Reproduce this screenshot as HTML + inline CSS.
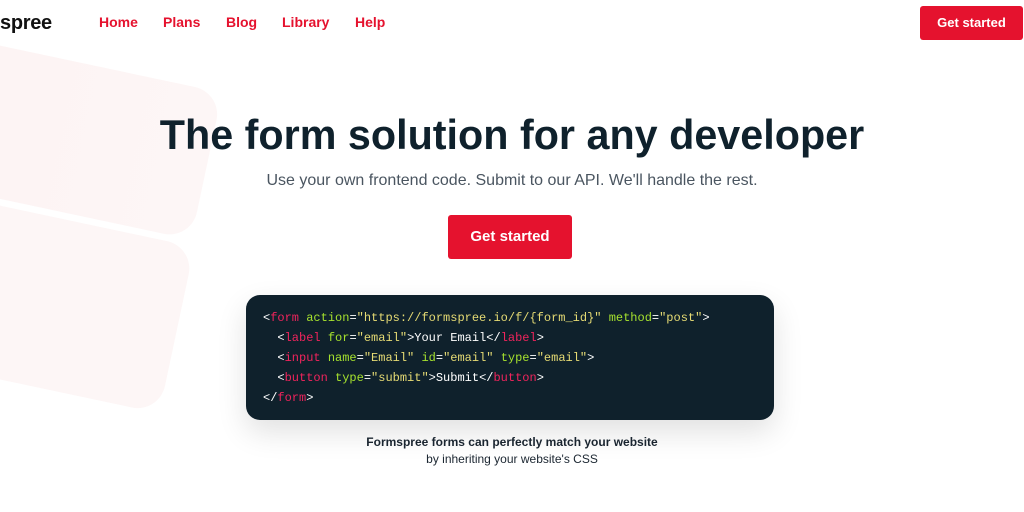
<!DOCTYPE html>
<html><head><meta charset="utf-8"><style>
body{margin:0;width:1024px;height:512px;overflow:hidden;background:#fff;font-family:"Liberation Sans",sans-serif;position:relative}
.shape{position:absolute;border-radius:28px}
.nav a{position:absolute;top:14px;color:#e5122e;font-weight:bold;font-size:14px;text-decoration:none}
.logo{position:absolute;left:0;top:12px;font-size:20px;font-weight:bold;color:#111;letter-spacing:-0.3px}
.btn{position:absolute;background:#e5122e;color:#fff;font-weight:bold;border-radius:3px;text-align:center}
h1{position:absolute;top:112px;left:0;width:1024px;margin:0;text-align:center;font-size:41.3px;color:#0f212c;letter-spacing:0}
.sub{position:absolute;top:172px;width:1024px;text-align:center;font-size:16px;color:#4a5560}
.code{position:absolute;left:246px;top:295px;width:528px;height:125px;background:#0f212c;border-radius:14px;box-shadow:0 12px 30px rgba(0,0,0,0.12);font-family:"Liberation Mono",monospace;font-size:12px;line-height:20px;color:#fff;box-sizing:border-box;padding:13px 0 0 17px;white-space:pre}
.t{color:#f0245c}.a{color:#a6e22e}.s{color:#e6db74}
.cap{position:absolute;top:434px;width:1024px;text-align:center;font-size:12px;color:#1a2530;line-height:17px}
</style></head><body>
<div class="shape" style="left:-90px;top:60px;width:300px;height:150px;transform:rotate(12deg);background:linear-gradient(90deg,#fdf3f3,#fdf6f6)"></div>
<div class="shape" style="left:-110px;top:215px;width:290px;height:170px;transform:rotate(12deg);background:#fdf6f6"></div>
<div class="logo">spree</div>
<div class="nav"><a style="left:99px">Home</a><a style="left:163px">Plans</a><a style="left:226px">Blog</a><a style="left:282px">Library</a><a style="left:355px">Help</a></div>
<div class="btn" style="left:920px;top:6px;width:103px;height:34px;line-height:34px;font-size:13px">Get started</div>
<h1>The form solution for any developer</h1>
<div class="sub">Use your own frontend code. Submit to our API. We'll handle the rest.</div>
<div class="btn" style="left:448px;top:215px;width:124px;height:44px;line-height:44px;font-size:15px">Get started</div>
<div class="code">&lt;<span class="t">form</span> <span class="a">action</span>=<span class="s">"https://formspree.io/f/{form_id}"</span> <span class="a">method</span>=<span class="s">"post"</span>&gt;
  &lt;<span class="t">label</span> <span class="a">for</span>=<span class="s">"email"</span>&gt;Your Email&lt;/<span class="t">label</span>&gt;
  &lt;<span class="t">input</span> <span class="a">name</span>=<span class="s">"Email"</span> <span class="a">id</span>=<span class="s">"email"</span> <span class="a">type</span>=<span class="s">"email"</span>&gt;
  &lt;<span class="t">button</span> <span class="a">type</span>=<span class="s">"submit"</span>&gt;Submit&lt;/<span class="t">button</span>&gt;
&lt;/<span class="t">form</span>&gt;</div>
<div class="cap"><b>Formspree forms can perfectly match your website</b><br>by inheriting your website's CSS</div>
</body></html>
